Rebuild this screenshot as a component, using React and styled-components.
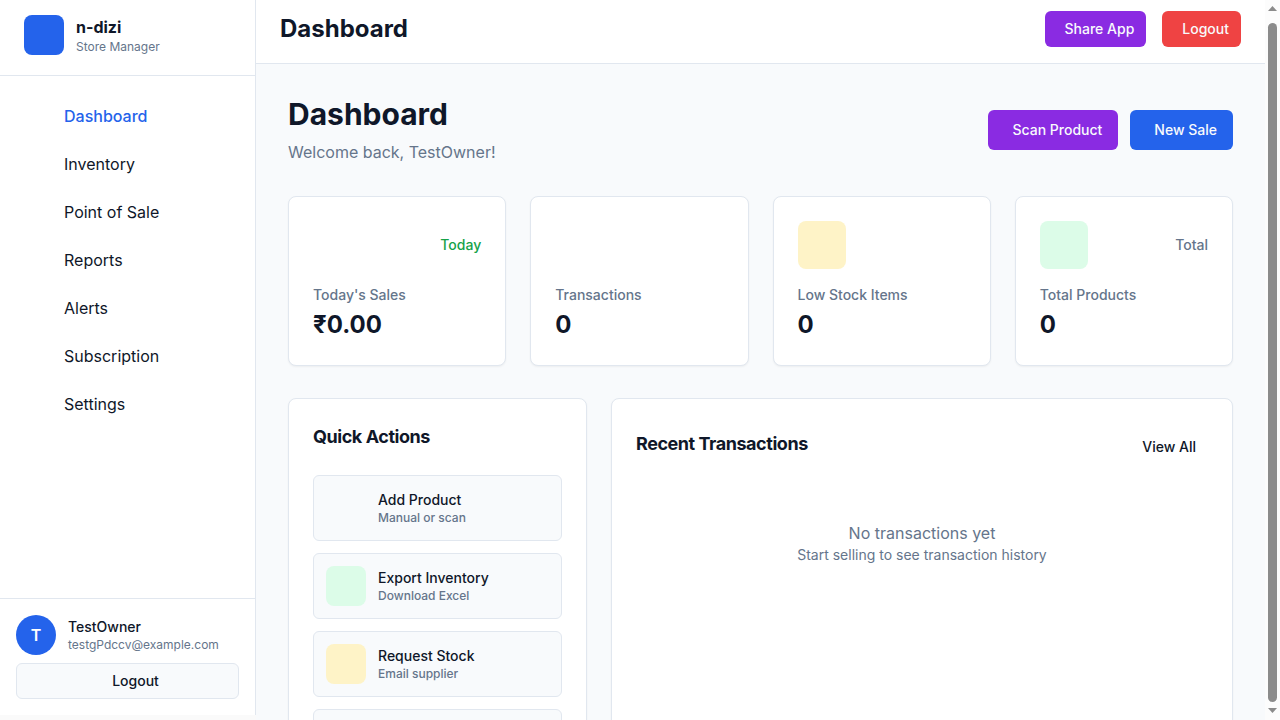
import React from "react";
import styled, { createGlobalStyle } from "styled-components";

const GlobalStyle = createGlobalStyle`
  *, *::before, *::after { box-sizing: border-box; }
  body {
    margin: 0;
    background: #fafafa;
    color: #0f1729;
    font-family: Inter, "Liberation Sans", sans-serif;
    font-size: 16px;
    line-height: 24px;
  }
  h1, h2, h3, p { margin: 0; }
  button { font-family: inherit; margin: 0; }
`;

const border = "#e1e7ef";
const muted = "#65758b";
const surface = "#f8fafc";

const Shell = styled.div`
  display: flex;
  height: 720px;
  overflow: hidden;
`;

const Sidebar = styled.aside`
  display: flex;
  flex-direction: column;
  flex: none;
  width: 256px;
  height: 715px;
  background: #fff;
  border-right: 1px solid ${border};
`;

const Brand = styled.div`
  display: flex;
  align-items: center;
  gap: 12px;
  padding: 15px 24px 20px;
  border-bottom: 1px solid ${border};
`;

const Logo = styled.div`
  width: 40px;
  height: 40px;
  border-radius: 8px;
  background: #2463eb;
`;

const BrandName = styled.div`
  font-weight: 700;
`;

const Caption = styled.div`
  font-size: 12px;
  line-height: 16px;
  font-weight: ${(p) => p.$weight || 400};
  color: ${muted};
`;

const Nav = styled.nav`
  display: flex;
  flex-direction: column;
  flex: 1;
  gap: 8px;
  padding: 20px 16px;
`;

const NavItem = styled.a`
  padding: 8px 12px 8px 48px;
  color: ${(p) => (p.$active ? "#2463eb" : "#0f1729")};
  font-weight: ${(p) => (p.$active ? 500 : 400)};
`;

const Account = styled.div`
  padding: 16px;
  border-top: 1px solid ${border};
`;

const User = styled.div`
  display: flex;
  align-items: center;
  gap: 12px;
  margin-bottom: 8px;
`;

const Avatar = styled.div`
  display: flex;
  align-items: center;
  justify-content: center;
  width: 40px;
  height: 40px;
  border-radius: 50%;
  background: #2463eb;
  color: #fff;
  font-weight: 600;
`;

const Label = styled.div`
  font-size: 14px;
  line-height: 20px;
  font-weight: 500;
  color: ${(p) => p.$color || "#0f1729"};
`;

const SignOut = styled.button`
  width: 100%;
  height: 36px;
  padding: 0 12px 0 28px;
  border: 1px solid ${border};
  border-radius: 6px;
  background: ${surface};
  color: #0f1729;
  font-size: 14px;
  line-height: 20px;
  font-weight: 500;
`;

const Main = styled.div`
  display: flex;
  flex-direction: column;
  flex: 1;
  min-width: 0;
  background: ${surface};
`;

const TopBar = styled.header`
  display: flex;
  align-items: center;
  justify-content: space-between;
  flex: none;
  height: 64px;
  padding: 11px 24px 16px;
  background: #fff;
  border-bottom: 1px solid ${border};
`;

const TopTitle = styled.h2`
  font-size: 24px;
  line-height: 32px;
  font-weight: 700;
`;

const Actions = styled.div`
  display: flex;
  gap: ${(p) => p.$gap}px;
`;

const Button = styled.button`
  height: ${(p) => (p.$small ? 36 : 40)}px;
  padding: ${(p) => (p.$small ? "0 12px 0 20px" : "0 16px 0 24px")};
  border: 0;
  border-radius: 6px;
  background: ${(p) => p.$bg};
  color: #f8fafc;
  font-size: 14px;
  line-height: 20px;
  font-weight: 500;
  white-space: nowrap;
`;

const Content = styled.main`
  flex: none;
  padding: 32px;
`;

const PageHead = styled.div`
  display: flex;
  align-items: center;
  justify-content: space-between;
  margin-bottom: 32px;
`;

const PageTitle = styled.h1`
  margin-bottom: 8px;
  font-size: 30px;
  line-height: 36px;
  font-weight: 700;
`;

const Welcome = styled.p`
  color: ${muted};
`;

const Stats = styled.div`
  display: grid;
  grid-template-columns: repeat(4, 1fr);
  gap: 24px;
  margin-bottom: 32px;
`;

const Card = styled.section`
  padding: 24px;
  border: 1px solid ${border};
  border-radius: 8px;
  background: #fff;
  box-shadow: 0 1px 2px rgba(0, 0, 0, 0.05);
`;

const StatHead = styled.div`
  display: flex;
  align-items: center;
  justify-content: space-between;
  margin-bottom: 16px;
`;

const Swatch = styled.div`
  flex: none;
  width: ${(p) => p.$size}px;
  height: ${(p) => p.$size}px;
  border-radius: 8px;
  background: ${(p) => p.$bg || "transparent"};
`;

const Value = styled.p`
  margin-top: 4px;
  font-size: 24px;
  line-height: 32px;
  font-weight: 700;
`;

const Panels = styled.div`
  display: grid;
  grid-template-columns: 299px 1fr;
  gap: 24px;
`;

const PanelTitle = styled.h3`
  font-size: 18px;
  line-height: 28px;
  font-weight: 700;
  letter-spacing: -0.025em;
`;

const ActionList = styled.div`
  display: flex;
  flex-direction: column;
  gap: 12px;
  margin-top: 24px;
`;

const ActionRow = styled.div`
  display: flex;
  align-items: center;
  gap: 12px;
  height: 66px;
  padding: 12px;
  border: 1px solid ${border};
  border-radius: 6px;
  background: ${surface};
`;

const PanelHead = styled.div`
  display: flex;
  justify-content: space-between;
  padding-top: 7px;
`;

const ViewAll = styled.a`
  padding: 7px 12px;
  font-size: 14px;
  line-height: 20px;
  font-weight: 500;
`;

const Empty = styled.div`
  padding-top: 57px;
  text-align: center;
  color: ${muted};
`;

const EmptyHint = styled.p`
  font-size: 14px;
  line-height: 20px;
`;

const Scrollbar = styled.div`
  display: flex;
  flex-direction: column;
  align-items: center;
  flex: none;
  width: 15px;
  padding: 6px 0 7px;
  background: #fcfcfc;
`;

const Thumb = styled.div`
  flex: 1;
  width: 9px;
  margin: 12px 0 6px;
  border-radius: 5px;
  background: #8b8b8b;
`;

const Arrow = ({ down }) => (
  <svg width="9" height="5" viewBox="0 0 9 5" fill="#8b8b8b">
    <path d={down ? "M0 0h9L4.5 5z" : "M0 5h9L4.5 0z"} />
  </svg>
);

const navItems = ["Dashboard", "Inventory", "Point of Sale", "Reports", "Alerts", "Subscription", "Settings"];

const stats = [
  { label: "Today's Sales", value: "₹0.00", tag: "Today", tagColor: "#16a249" },
  { label: "Transactions", value: "0" },
  { label: "Low Stock Items", value: "0", bg: "#fef3c7" },
  { label: "Total Products", value: "0", bg: "#dcfce8", tag: "Total", tagColor: muted },
];

const quickActions = [
  { title: "Add Product", hint: "Manual or scan" },
  { title: "Export Inventory", hint: "Download Excel", bg: "#dcfce8" },
  { title: "Request Stock", hint: "Email supplier", bg: "#fef3c7" },
];

export default function App() {
  return (
    <>
      <GlobalStyle />
      <Shell>
        <Sidebar>
          <Brand>
            <Logo />
            <div>
              <BrandName>n-dizi</BrandName>
              <Caption>Store Manager</Caption>
            </div>
          </Brand>
          <Nav>
            {navItems.map((item, i) => (
              <NavItem key={item} $active={i === 0}>{item}</NavItem>
            ))}
          </Nav>
          <Account>
            <User>
              <Avatar>T</Avatar>
              <div>
                <Label>TestOwner</Label>
                <Caption>testgPdccv@example.com</Caption>
              </div>
            </User>
            <SignOut>Logout</SignOut>
          </Account>
        </Sidebar>
        <Main>
          <TopBar>
            <TopTitle>Dashboard</TopTitle>
            <Actions $gap={16}>
              <Button $small $bg="#8a2be2">Share App</Button>
              <Button $small $bg="#ef4343">Logout</Button>
            </Actions>
          </TopBar>
          <Content>
            <PageHead>
              <div>
                <PageTitle>Dashboard</PageTitle>
                <Welcome>Welcome back, TestOwner!</Welcome>
              </div>
              <Actions $gap={12}>
                <Button $bg="#8a2be2">Scan Product</Button>
                <Button $bg="#2463eb">New Sale</Button>
              </Actions>
            </PageHead>
            <Stats>
              {stats.map((s) => (
                <Card key={s.label}>
                  <StatHead>
                    <Swatch $size={48} $bg={s.bg} />
                    {s.tag && <Label $color={s.tagColor}>{s.tag}</Label>}
                  </StatHead>
                  <Label $color={muted}>{s.label}</Label>
                  <Value>{s.value}</Value>
                </Card>
              ))}
            </Stats>
            <Panels>
              <Card>
                <PanelTitle>Quick Actions</PanelTitle>
                <ActionList>
                  {quickActions.map((a) => (
                    <ActionRow key={a.title}>
                      <Swatch $size={40} $bg={a.bg} />
                      <div>
                        <Label>{a.title}</Label>
                        <Caption $weight={500}>{a.hint}</Caption>
                      </div>
                    </ActionRow>
                  ))}
                  <ActionRow />
                </ActionList>
              </Card>
              <Card>
                <PanelHead>
                  <PanelTitle>Recent Transactions</PanelTitle>
                  <ViewAll>View All</ViewAll>
                </PanelHead>
                <Empty>
                  <p>No transactions yet</p>
                  <EmptyHint>Start selling to see transaction history</EmptyHint>
                </Empty>
              </Card>
            </Panels>
          </Content>
        </Main>
        <Scrollbar>
          <Arrow />
          <Thumb />
          <Arrow down />
        </Scrollbar>
      </Shell>
    </>
  );
}
